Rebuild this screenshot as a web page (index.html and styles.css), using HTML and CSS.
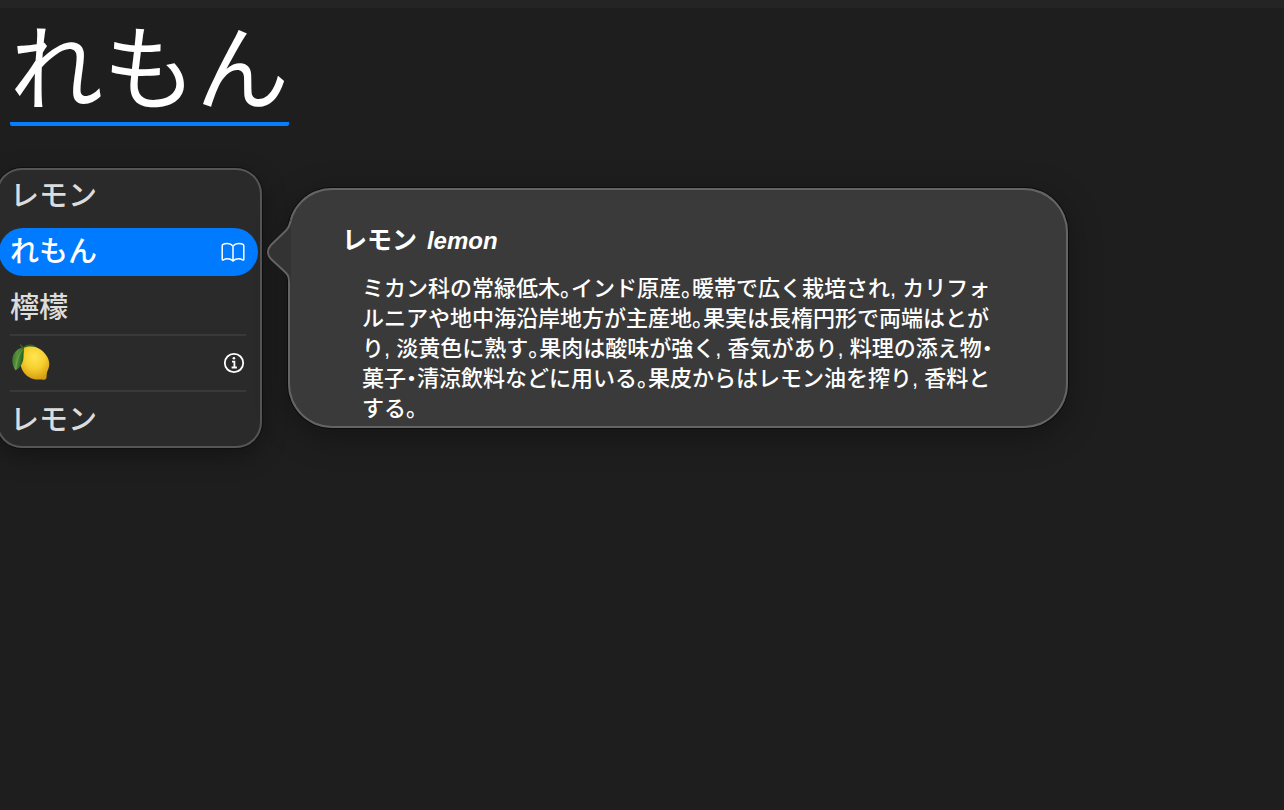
FILE: index.html
```html
<!DOCTYPE html>
<html lang="ja">
<head>
<meta charset="utf-8">
<meta name="viewport" content="width=device-width, initial-scale=1">
<title>れもん</title>
<link rel="stylesheet" href="styles.css">
</head>
<body>
<main class="editor">
  <input class="composition" type="text" value="れもん" aria-label="入力">
  <div class="popups">
    <div class="candidates" role="group" aria-label="変換候補">
      <button class="candidate" type="button"><span class="label">レモン</span></button>
      <button class="candidate selected" type="button">
        <span class="label">れもん</span>
        <svg class="icon" viewBox="0 0 24 24" width="24" height="24" aria-hidden="true">
          <path d="M12 6C10.400 4.100 8.300 3.500 6.200 3.500C4.300 3.500 2.600 4 1.700 4.700C1.300 5 1.200 5.300 1.200 5.800V19.300C1.200 20.100 1.800 20.300 2.400 19.900C3.500 19.200 4.800 18.800 6.300 18.800C8.500 18.800 10.500 19.400 12 21C13.500 19.400 15.500 18.800 17.700 18.800C19.200 18.800 20.500 19.200 21.600 19.900C22.200 20.300 22.800 20.100 22.800 19.300V5.800C22.800 5.300 22.700 5 22.300 4.700C21.400 4 19.700 3.500 17.800 3.500C15.700 3.500 13.600 4.100 12 6ZM12 6V20.500"/>
        </svg>
      </button>
      <button class="candidate" type="button"><span class="label">檸檬</span></button>
      <button class="candidate ruled" type="button" aria-label="レモンの絵文字">
        <svg class="lemon" viewBox="-1 2 40 40" width="40" height="40" aria-hidden="true">
          <defs>
            <radialGradient id="peel" cx="0.5" cy="0.32" r="0.7">
              <stop offset="0" stop-color="#ffe653"/>
              <stop offset="0.5" stop-color="#f6cf2e"/>
              <stop offset="1" stop-color="#d39a12"/>
            </radialGradient>
            <linearGradient id="leaf" x1="0" y1="0" x2="1" y2="0.3">
              <stop offset="0" stop-color="#2f6b20"/>
              <stop offset="0.5" stop-color="#579640"/>
              <stop offset="1" stop-color="#255c19"/>
            </linearGradient>
          </defs>
          <path fill="#2f6620" d="M12 5.500C15 1.500 23 .8 27.500 7L20 9L12 7Z"/>
          <path fill="url(#peel)" d="M13 5.800C18 3.500 25 4 29.500 7.600C34 11 38.200 16 38.300 22C38.400 26 36.200 28.500 35.800 31.500C35.500 34 36 37 34 37.500C32.500 38 31.500 37.400 28 37.500C22 38 16 35 12.500 30C9.500 25.500 8 18 9.500 12C10 9 11 7 13 5.800Z"/>
          <path fill="url(#leaf)" d="M12.500 5.500C7 6 2.500 10 1.400 16C.8 21 2.500 25.500 4.500 28.500C9.500 25.500 12.500 20.500 12.500 14.500C12.600 11 13.200 8.500 12.500 5.500Z"/>
          <path fill="none" stroke="#7bad5d" stroke-width="0.7" d="M11.500 7.500C8 12 5.500 19 4.700 27"/>
          <path fill="none" stroke="#4e5a2c" stroke-width="1.300" stroke-linecap="round" d="M9.500 3L12.500 6.500"/>
        </svg>
        <svg class="icon info" viewBox="0 1 24 24" width="24" height="24" aria-hidden="true">
          <circle cx="13" cy="12" r="9.200"/>
          <path d="M11 10.600H13.400V16.300M10.600 16.500H15.900"/>
          <circle class="dot" cx="12.900" cy="7.300" r="1.300"/>
        </svg>
      </button>
      <button class="candidate ruled" type="button"><span class="label">レモン</span></button>
    </div>
    <article class="definition">
      <svg class="pointer" viewBox="0 0 26 64" width="26" height="64" aria-hidden="true">
        <path class="fill" d="M25 2C24 7 23 9 20 12L5 26.500C1.200 30.500 1.200 35.500 5 39.500L19 52.500C22 55.500 23 57 23 63H25Z"/>
        <path class="shade" d="M24 1C23 6 22 8 19.500 10.500L4 25.500C-.3 30 -.3 36 4 40.500L18 53.500C21 56.500 21.500 58 21.500 63"/>
        <path class="edge" d="M24.500 2C23.500 7 22.500 9 20 11.500L5 26C1 30.300 1 35.700 5 40L19 53C22 56 23 57.500 23 63"/>
      </svg>
      <h1 class="headword">レモン <i>lemon</i></h1>
      <p class="meaning">ミカン科の常緑低木<span class="half">。</span>インド原産<span class="half">。</span>暖帯で広く栽培され, カリフォ<br>ルニアや地中海沿岸地方が主産地<span class="half">。</span>果実は長楕円形で両端はとが<br>り, 淡黄色に熟す<span class="half">。</span>果肉は酸味が強く, 香気があり, 料理の添え物<span class="half">・</span><br>菓子<span class="half">・</span>清涼飲料などに用いる<span class="half">。</span>果皮からはレモン油を搾り, 香料と<br>する。</p>
    </article>
  </div>
</main>
</body>
</html>
```
FILE: styles.css
```css
* {
  box-sizing: border-box;
}

body {
  margin: 0;
  min-height: 100vh;
  border-top: 8px solid #242424;
  background: #1e1e1e;
  color: #fff;
  font-family: "Liberation Sans", "Noto Sans CJK JP", sans-serif;
  overflow-x: hidden;
}

.composition {
  display: block;
  width: 3em;
  height: 118px;
  margin: 0 0 0 10px;
  padding: 0 0 6px;
  border: 0;
  border-bottom: 4px solid #077dff;
  border-radius: 2px;
  outline: 0;
  background: none;
  color: #fff;
  font: 93px "Noto Sans CJK JP", sans-serif;
}

.popups {
  display: flex;
  align-items: flex-start;
  gap: 26px;
  margin: 42px 0 0 -4px;
}

.candidates {
  flex: none;
  width: 266px;
  padding-bottom: 4px;
  border-radius: 26px;
  background: #2a2a2a;
  box-shadow: inset 0 0 0 2px #555, 0 0 0 1px #101010, 0 8px 24px rgba(0, 0, 0, 0.35);
}

.candidate {
  position: relative;
  display: flex;
  align-items: center;
  justify-content: space-between;
  width: 259px;
  height: 48px;
  margin: 4px 4px 8px 3px;
  padding: 0 13px 0 11px;
  border: 0;
  border-radius: 24px;
  background: none;
  color: #dcdcdc;
  font: 500 29px/42px "Noto Sans CJK JP", sans-serif;
  text-align: left;
}

.candidate:last-child {
  margin-bottom: 0;
}

.selected {
  background: #007aff;
  color: #fff;
}

.ruled::before {
  content: "";
  position: absolute;
  top: -6px;
  right: 12px;
  left: 11px;
  height: 2px;
  background: #393939;
}

.label {
  padding-bottom: 6px;
}

.icon {
  fill: none;
  stroke: #fff;
  stroke-width: 1.5;
}

.info {
  stroke-width: 1.8;
}

.info,
.lemon {
  overflow: visible;
}

.icon .dot {
  fill: #fff;
  stroke: none;
}

.definition {
  position: relative;
  flex: 0 1 780px;
  margin-top: 20px;
  padding: 34px 54px 4px;
  border-radius: 44px;
  background: #3a3a3a;
  box-shadow: inset 0 0 0 2px #646464, 0 0 0 1px #0c0c0c, 0 8px 32px rgba(0, 0, 0, 0.35);
}

.pointer {
  position: absolute;
  top: 31px;
  left: -22px;
}

.pointer .fill {
  fill: #333;
}

.pointer .shade {
  fill: none;
  stroke: #0c0c0c;
  stroke-width: 1;
}

.pointer .edge {
  fill: none;
  stroke: #646464;
  stroke-width: 2;
}

.headword {
  margin: 0 0 15px;
  font: bold 25px/36px "Liberation Sans", "Noto Sans CJK JP", sans-serif;
}

.headword i {
  margin-left: 3px;
  font-size: 24px;
}

.meaning {
  margin: 0 0 0 20px;
  font-size: 22px;
  font-weight: 500;
  line-height: 30px;
  white-space: nowrap;
}

.half {
  font-feature-settings: "halt";
}
```
